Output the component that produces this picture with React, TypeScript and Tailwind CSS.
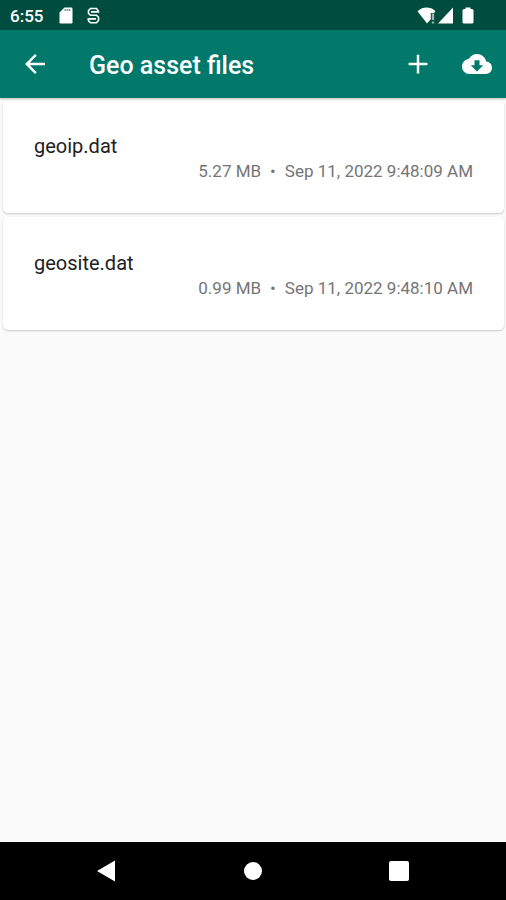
import React from 'react';

interface GeoAsset {
  name: string;
  size: string;
  modified: string;
}

const assets: GeoAsset[] = [
  { name: 'geoip.dat', size: '5.27 MB', modified: 'Sep 11, 2022 9:48:09 AM' },
  { name: 'geosite.dat', size: '0.99 MB', modified: 'Sep 11, 2022 9:48:10 AM' }
];

function StatusBar() {
  return (
    <div className="h-[30px] bg-[#004d40] pt-px pl-[10px] pr-8 flex items-center justify-between">
      <div className="flex items-center gap-[14px]">
        <span className="text-[17px] leading-5 font-medium">6:55</span>
        {/* SD card */}
        <svg className="w-4 h-[18px]" viewBox="0 0 16 18" fill="currentColor">
          <path d="M7.500 0.500H14.300A1.200 1.200 0 0 1 15.500 1.700v13.600A1.200 1.200 0 0 1 14.300 16.500H3.700A1.200 1.200 0 0 1 2.500 15.300V5.500Z" />
          <path d="M7.500 3H14" stroke="#004d40" strokeWidth="1.600" strokeDasharray="1.600 0.600" opacity="0.7" />
        </svg>
        <svg className="w-4 h-[18px] -ml-0.5" viewBox="0 0 16 18" fill="none" stroke="currentColor" strokeWidth="1.6">
          <path d="M13 5V3.500L11.500 1.500H5.500L3.500 3.500V6.500L5.500 8.300H11.500L13.500 10.300V13.500L11.500 15.800H5.500L3.500 13.800V12" />
          <path d="M6 4.900H14.300M2.500 11.900H11" />
        </svg>
      </div>

      <div className="flex items-center gap-px">
        {/* Wi-Fi, no internet */}
        <svg className="w-5 h-[18px]" viewBox="0 0 20 18" fill="currentColor">
          <path d="M1.500 4.300C4.500 1.500 7.500 0.500 10.500 0.500S17 1.500 19.500 4.300L18 6H14.800v6.300L11 16.500Z" />
          <path d="M15.800 6.500h2.400v6.500h-2.400zM15.800 14.500h2.400v2h-2.400z" opacity="0.6" />
        </svg>
        <svg className="w-4 h-[18px]" viewBox="0 0 16 18" fill="currentColor">
          <path d="M16 0.500v16H1Z" />
        </svg>
        <svg className="w-3 h-[18px] ml-2" viewBox="0 0 12 18" fill="currentColor">
          <path d="M3.500 0.500h5v1.500H10a1.500 1.500 0 0 1 1.500 1.500v11.500A1.500 1.500 0 0 1 10 16.500H2A1.500 1.500 0 0 1 .500 15V3.500A1.500 1.500 0 0 1 2 2h1.500Z" />
        </svg>
      </div>
    </div>
  );
}

function AppBar() {
  return (
    <header className="relative h-[68px] bg-[#00796b] px-[14px] flex items-center shadow-[0_1px_2px_rgba(0,0,0,0.25)]">
      <button type="button" aria-label="Back" className="ml-[6px] cursor-pointer">
        <svg className="w-[30px] h-[30px]" viewBox="0 0 24 24" fill="currentColor">
          <path d="M20 11H7.830l5.590-5.590L12 4l-8 8 8 8 1.410-1.410L7.830 13H20v-2z" />
        </svg>
      </button>
      <h1 className="ml-[39px] pt-1 flex-1 text-[25px] leading-8 font-medium">Geo asset files</h1>
      <button type="button" aria-label="Add file" className="cursor-pointer">
        <svg className="w-[30px] h-[30px]" viewBox="0 0 24 24" fill="currentColor">
          <path d="M19.500 13h-6.500v6.500h-2v-6.500H4.500v-2h6.500V4.500h2v6.500h6.500v2z" />
        </svg>
      </button>
      <button type="button" aria-label="Download files" className="ml-[29px] cursor-pointer">
        <svg className="w-[30px] h-[30px]" viewBox="0 0 24 24" fill="currentColor">
          <path
            fillRule="evenodd"
            d="M19.350 10.040C18.670 6.590 15.640 4 12 4 9.110 4 6.600 5.640 5.350 8.040 2.340 8.360 0 10.910 0 14c0 3.310 2.690 6 6 6h13c2.760 0 5-2.240 5-5 0-2.640-2.050-4.780-4.650-4.960zM17 13l-5 5-5-5h3V9h4v4h3z"
          />
        </svg>
      </button>
    </header>
  );
}

function NavBar() {
  return (
    <nav className="h-[58px] bg-black px-[34px] flex items-center">
      <button type="button" aria-label="System back" className="flex-1 flex justify-center cursor-pointer">
        <svg className="w-5 h-[22px]" viewBox="0 0 20 22" fill="currentColor">
          <path d="M18 0.500v21L0 11Z" />
        </svg>
      </button>
      <button type="button" aria-label="Home" className="flex-1 flex justify-center cursor-pointer">
        <span className="size-[18px] rounded-full bg-white" />
      </button>
      <button type="button" aria-label="Recent apps" className="flex-1 flex justify-center cursor-pointer">
        <span className="size-5 rounded-xs bg-white" />
      </button>
    </nav>
  );
}

export default function App() {
  return (
    <div className="min-h-screen flex flex-col bg-[#fafafa] text-white font-['Roboto',sans-serif]">
      <StatusBar />
      <AppBar />

      <main className="flex-1 pl-[3px] pr-[2px] pt-[2px]">
        <ul className="space-y-1">
          {assets.map((asset) => (
            <li
              key={asset.name}
              className="bg-white rounded-[5px] px-[31px] pt-[34px] pb-[30px] shadow-[0_1px_2px_rgba(0,0,0,0.2)]"
            >
              <p className="text-[20px] leading-[25px] text-[#212121]">{asset.name}</p>
              <p className="flex justify-end gap-[9px] text-[17px] leading-6 text-[#757575]">
                <span>{asset.size}</span>
                <span>•</span>
                <span>{asset.modified}</span>
              </p>
            </li>
          ))}
        </ul>
      </main>

      <NavBar />
    </div>
  );
}
